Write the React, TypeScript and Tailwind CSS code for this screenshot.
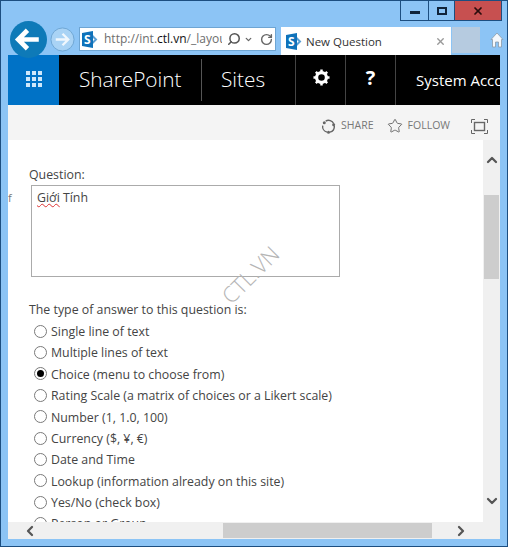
import { ChevronDown, ChevronLeft, ChevronRight, ChevronUp, RotateCw, Search, Star, X } from 'lucide-react';

const answerTypes = [
  'Single line of text',
  'Multiple lines of text',
  'Choice (menu to choose from)',
  'Rating Scale (a matrix of choices or a Likert scale)',
  'Number (1, 1.0, 100)',
  'Currency ($, ¥, €)',
  'Date and Time',
  'Lookup (information already on this site)',
  'Yes/No (check box)',
  'Person or Group',
];

function SpLogo() {
  return (
    <div className="relative w-[17px] h-[17px] shrink-0">
      <svg viewBox="0 0 17 17" className="absolute inset-0 w-[17px] h-[17px]">
        <path d="M10 4.5 L14 8.5 L10 12.5" fill="none" stroke="#5a9fd4" strokeWidth="2" />
        <path d="M0 2 L11 0 V17 L0 15 Z" fill="#0f72ba" />
      </svg>
      <span className="absolute left-[2px] top-[0px] text-[12px] leading-[17px] font-bold text-white">S</span>
    </div>
  );
}

function WaffleIcon() {
  return (
    <div className="grid grid-cols-3 gap-[2px]">
      {Array.from({ length: 9 }).map((_, i) => (
        <div key={i} className="w-[4px] h-[4px] bg-[#cfe8fb]" />
      ))}
    </div>
  );
}

function GearIcon() {
  return (
    <svg viewBox="0 0 18 18" className="w-[17px] h-[17px]">
      <circle cx="9" cy="9" r="5.2" fill="none" stroke="#fff" strokeWidth="3.4" />
      <path d="M9 0.5V4M9 14V17.5M0.5 9H4M14 9H17.5M3 3L5.4 5.4M12.6 12.6L15 15M15 3L12.6 5.4M5.4 12.6L3 15" stroke="#fff" strokeWidth="2.6" />
    </svg>
  );
}

function ShareIcon() {
  return (
    <svg viewBox="0 0 16 16" className="w-[15px] h-[15px]" fill="none" stroke="#666" strokeWidth="1.5">
      <path d="M5 2.2A6.2 6.2 0 0 1 13.6 5" />
      <path d="M14.2 7.5A6.2 6.2 0 0 1 9.5 14" />
      <path d="M6.5 14A6.2 6.2 0 0 1 1.8 7" />
      <circle cx="3.5" cy="4" r="1.6" fill="#666" stroke="none" />
      <circle cx="13.5" cy="6" r="1.6" fill="#666" stroke="none" />
      <circle cx="8" cy="14" r="1.6" fill="#666" stroke="none" />
    </svg>
  );
}

function FocusIcon() {
  return (
    <svg viewBox="0 0 17 15" className="w-[17px] h-[15px]" fill="none" stroke="#666" strokeWidth="1">
      <path d="M0.5 4V0.5H4M13 0.5H16.5V4M16.5 11V14.5H13M4 14.5H0.5V11" />
      <rect x="3.5" y="3.5" width="10" height="8" strokeWidth="1.4" />
    </svg>
  );
}

function BackButton() {
  return (
    <svg viewBox="0 0 36 36" className="w-[37px] h-[37px]">
      <circle cx="18" cy="18" r="18" fill="#0e7ab8" />
      <path d="M8 18H28M17 9L8 18L17 27" fill="none" stroke="#fff" strokeWidth="4.6" />
    </svg>
  );
}

function ForwardButton() {
  return (
    <svg viewBox="0 0 26 26" className="w-[25px] h-[25px]">
      <circle cx="13" cy="13" r="12" fill="#a9d3f5" stroke="#6ea5d3" />
      <path d="M6 13H19M13 7L19 13L13 19" fill="none" stroke="#f0f7fd" strokeWidth="2.4" />
    </svg>
  );
}

function HomeIcon() {
  return (
    <svg viewBox="0 0 14 16" className="w-[14px] h-[16px]">
      <path d="M7 1L13 7.5H11.5V15H8.5V10H5.5V15H2.5V7.5H1Z" fill="#f4f8fc" stroke="#8a9aa8" strokeWidth="0.8" />
    </svg>
  );
}

function Radio({ checked }: { checked: boolean }) {
  return (
    <div className="w-[13px] h-[13px] -mt-[2px] rounded-full border border-[#7a7a7a] bg-white flex items-center justify-center shrink-0">
      {checked && <div className="w-[7px] h-[7px] rounded-full bg-black" />}
    </div>
  );
}

export default function App() {
  return (
    <div className="relative w-[508px] h-[547px] overflow-hidden bg-[#8cc4f5] border border-[#1c4e80] flex flex-col text-[#444] font-['Open_Sans','Liberation_Sans',sans-serif]">
      {/* window controls */}
      <div className="h-[20px] flex justify-end pr-[5px] shrink-0">
        <div className="flex h-[20px] border border-t-0 border-[#1c4e80]">
          <div className="w-[28px] flex items-center justify-center border-r border-[#1c4e80]">
            <div className="w-[10px] h-[3px] mt-[3px] bg-[#10243a]" />
          </div>
          <div className="w-[26px] flex items-center justify-center border-r border-[#1c4e80]">
            <div className="w-[10px] h-[8px] border-2 border-[#10243a]" />
          </div>
          <div className="w-[46px] flex items-center justify-center bg-[#c75050]">
            <X size={12} strokeWidth={3.5} color="#2a0d0d" />
          </div>
        </div>
      </div>

      {/* browser toolbar */}
      <div className="h-[34px] flex items-start shrink-0 pl-[8px] pt-[6px]">
        <div className="w-[70px] shrink-0" />
        <div className="w-[197px] h-[24px] bg-white border border-[#6ea5d3] flex items-center pl-[2px] shrink-0">
          <SpLogo />
          <div className="ml-[5px] w-[118px] overflow-hidden whitespace-nowrap text-[12px] text-[#6d6d6d]">
            http://int.<span className="text-[#111]">ctl.vn</span>/_layouts/
          </div>
          <Search size={14} strokeWidth={2.6} color="#555" className="ml-[5px] -scale-x-100" />
          <ChevronDown size={9} strokeWidth={3.5} color="#666" className="ml-[3px]" />
          <RotateCw size={13} strokeWidth={2.6} color="#666" className="ml-[7px]" />
        </div>
        <div className="ml-[5px] w-[170px] h-[28px] bg-white flex items-center pl-[5px] shrink-0">
          <SpLogo />
          <span className="ml-[3px] mt-[2px] text-[11.5px] text-[#333]">New Question</span>
          <X size={11} strokeWidth={3} color="#999" className="ml-auto mr-[5px]" />
        </div>
        <div className="w-[28px] h-[26px] bg-[#b6cbe0] ml-[1px] shrink-0" />
        <div className="ml-[10px] mt-[5px]">
          <HomeIcon />
        </div>
      </div>

      {/* back / forward */}
      <div className="absolute left-[9px] top-[20px]">
        <BackButton />
      </div>
      <div className="absolute left-[49px] top-[26px]">
        <ForwardButton />
      </div>

      {/* page */}
      <div className="mx-[7px] h-[484px] shrink-0 flex flex-col bg-white overflow-hidden">
        {/* suite bar */}
        <div className="h-[50px] bg-black flex items-stretch text-white shrink-0">
          <div className="w-[51px] bg-[#0072c6] flex items-center justify-center pb-[2px]">
            <WaffleIcon />
          </div>
          <div className="w-[142px] flex items-center pl-[20px] text-[20.8px] font-light">SharePoint</div>
          <div className="w-[94px] flex items-center pl-[20px] text-[20.8px] font-light relative">
            Sites
            <div className="absolute left-0 top-[4px] bottom-[4px] w-px bg-[#555]" />
          </div>
          <div className="w-[50px] flex items-center justify-center border-l border-[#444] pb-[5px] pl-[1px]">
            <GearIcon />
          </div>
          <div className="w-[50px] flex items-center justify-center border-l border-[#444] text-[20px] font-bold pb-[4px]">?</div>
          <div className="flex-1 flex items-center pl-[20px] border-l border-[#444] text-[15px] whitespace-nowrap overflow-hidden">
            System Account
          </div>
        </div>

        {/* ribbon */}
        <div className="h-[35px] bg-[#f4f4f4] flex items-center justify-end shrink-0 pt-[7px] text-[10.5px] text-[#777]">
          <ShareIcon />
          <span className="ml-[5px]">SHARE</span>
          <Star size={16} strokeWidth={1.4} color="#666" className="ml-[13px]" />
          <span className="ml-[5px]">FOLLOW</span>
          <div className="ml-[21px] mr-[12px] flex">
            <FocusIcon />
          </div>
        </div>

        {/* scroll area */}
        <div className="flex-1 flex min-h-0">
          <div className="relative flex-1 overflow-hidden pl-[21px] pt-[27px] text-[12.35px]">
            <span className="absolute left-0 top-[50px] text-[11px] text-[#777]">f</span>
            <div className="leading-[16px]">Question:</div>
            <div className="mt-[2px] ml-[2px] w-[309px] h-[92px] border border-[#ababab] px-[5px] pt-[3px] leading-[18px] text-[#444]">
              <span className="underline decoration-wavy decoration-[#d33] decoration-1">Giới</span> Tính
            </div>
            <div className="mt-[25px] leading-[16px]">The type of answer to this question is:</div>
            <div className="mt-[3.5px] pl-[5px] flex flex-col">
              {answerTypes.map((label, i) => (
                <div key={label} className="h-[21.4px] flex items-center gap-[4px] whitespace-nowrap">
                  <Radio checked={i === 2} />
                  <span>{label}</span>
                </div>
              ))}
            </div>
            <div className="absolute left-[207px] top-[118px] -rotate-45 text-[22px] font-light text-[#b5b5b5] whitespace-nowrap">
              CTL.VN
            </div>
          </div>
          {/* vertical scrollbar */}
          <div className="w-[17px] bg-[#f0f0f0] flex flex-col items-center shrink-0">
            <ChevronUp size={16} strokeWidth={3.4} color="#555" className="mt-[12px]" />
            <div className="w-[15px] h-[84px] mt-[27px] bg-[#cdcdcd]" />
            <ChevronDown size={16} strokeWidth={3.4} color="#555" className="mt-[214px]" />
          </div>
        </div>

        {/* horizontal scrollbar */}
        <div className="h-[17px] bg-[#f0f0f0] flex items-center shrink-0">
          <ChevronLeft size={16} strokeWidth={3.4} color="#555" className="ml-[14px]" />
          <div className="w-[209px] h-[15px] ml-[185px] bg-[#cdcdcd]" />
          <ChevronRight size={16} strokeWidth={3.4} color="#555" className="ml-[21px]" />
        </div>
      </div>
    </div>
  );
}
